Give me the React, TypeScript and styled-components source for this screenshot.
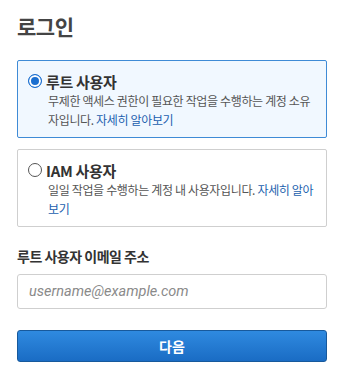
import styled, { createGlobalStyle } from 'styled-components';

const GlobalStyle = createGlobalStyle`
  html, body {
    margin: 0;
    padding: 0;
    background: #fff;
  }
  body {
    font-family: 'Noto Sans CJK KR', 'Noto Sans', sans-serif;
    color: #333;
  }
`;

const Page = styled.div`
  width: 310px;
  padding: 12px 17px 0 17px;
`;

const Title = styled.h1`
  margin: 0 0 20px 0;
  font-size: 21px;
  line-height: 28px;
  font-weight: 700;
  color: #444;
  letter-spacing: -0.5px;
`;

const Options = styled.div`
  display: flex;
  flex-direction: column;
  gap: 11px;
`;

const OptionCard = styled.label<{ $selected?: boolean }>`
  display: block;
  box-sizing: border-box;
  min-height: 78px;
  padding: 10px 8px 8px 10px;
  border: 1px solid ${(p) => (p.$selected ? '#3f8bd6' : '#cfcfcf')};
  background: ${(p) => (p.$selected ? '#f1f8ff' : '#fff')};
  border-radius: 2px;
  cursor: pointer;
`;

const OptionHead = styled.div`
  display: flex;
  align-items: center;
  gap: 4px;
  height: 20px;
`;

const Radio = styled.span<{ $checked?: boolean }>`
  box-sizing: border-box;
  width: 14px;
  height: 14px;
  border-radius: 50%;
  border: 1px solid ${(p) => (p.$checked ? '#1b6fd0' : '#555')};
  background: ${(p) => (p.$checked ? '#1b6fd0' : '#fff')};
  box-shadow: ${(p) => (p.$checked ? 'inset 0 0 0 2px #fff' : 'none')};
  flex: none;
`;

const OptionName = styled.span`
  font-size: 15px;
  font-weight: 700;
  color: #333;
  letter-spacing: -0.3px;
`;

const OptionDesc = styled.p`
  margin: 0;
  padding-left: 20px;
  font-size: 12px;
  line-height: 19px;
  letter-spacing: -0.35px;
  color: #555;
`;

const Link = styled.a`
  color: #1b5fae;
  text-decoration: none;
`;

const Field = styled.div`
  margin-top: 19px;
  display: flex;
  flex-direction: column;
  gap: 8px;
`;

const FieldLabel = styled.label`
  font-size: 14px;
  font-weight: 700;
  line-height: 20px;
  letter-spacing: -0.5px;
  color: #333;
`;

const Input = styled.input`
  box-sizing: border-box;
  width: 100%;
  height: 35px;
  padding: 0 11px;
  border: 1px solid #cfcfcf;
  border-radius: 3px;
  font-family: Roboto, 'Noto Sans', sans-serif;
  font-size: 14.5px;
  color: #333;
  outline: none;

  &::placeholder {
    color: #8a8a8a;
    font-style: italic;
  }
`;

const Button = styled.button`
  box-sizing: border-box;
  width: 100%;
  height: 32px;
  margin-top: 21px;
  border: 1px solid #17599c;
  border-radius: 3px;
  background: linear-gradient(#2f8ae0, #1a6cc4);
  color: #fff;
  font-family: 'Noto Sans CJK KR', sans-serif;
  font-size: 14px;
  font-weight: 700;
  cursor: pointer;
`;

export default function App() {
  return (
    <>
      <GlobalStyle />
      <Page>
        <Title>로그인</Title>
        <Options>
          <OptionCard $selected>
            <OptionHead>
              <Radio $checked />
              <OptionName>루트 사용자</OptionName>
            </OptionHead>
            <OptionDesc>
              무제한 액세스 권한이 필요한 작업을 수행하는 계정 소유자입니다.{' '}
              <Link href="#">자세히 알아보기</Link>
            </OptionDesc>
          </OptionCard>
          <OptionCard>
            <OptionHead>
              <Radio />
              <OptionName>IAM 사용자</OptionName>
            </OptionHead>
            <OptionDesc>
              일일 작업을 수행하는 계정 내 사용자입니다.{' '}
              <Link href="#">자세히 알아보기</Link>
            </OptionDesc>
          </OptionCard>
        </Options>
        <Field>
          <FieldLabel>루트 사용자 이메일 주소</FieldLabel>
          <Input placeholder="username@example.com" />
        </Field>
        <Button>다음</Button>
      </Page>
    </>
  );
}
